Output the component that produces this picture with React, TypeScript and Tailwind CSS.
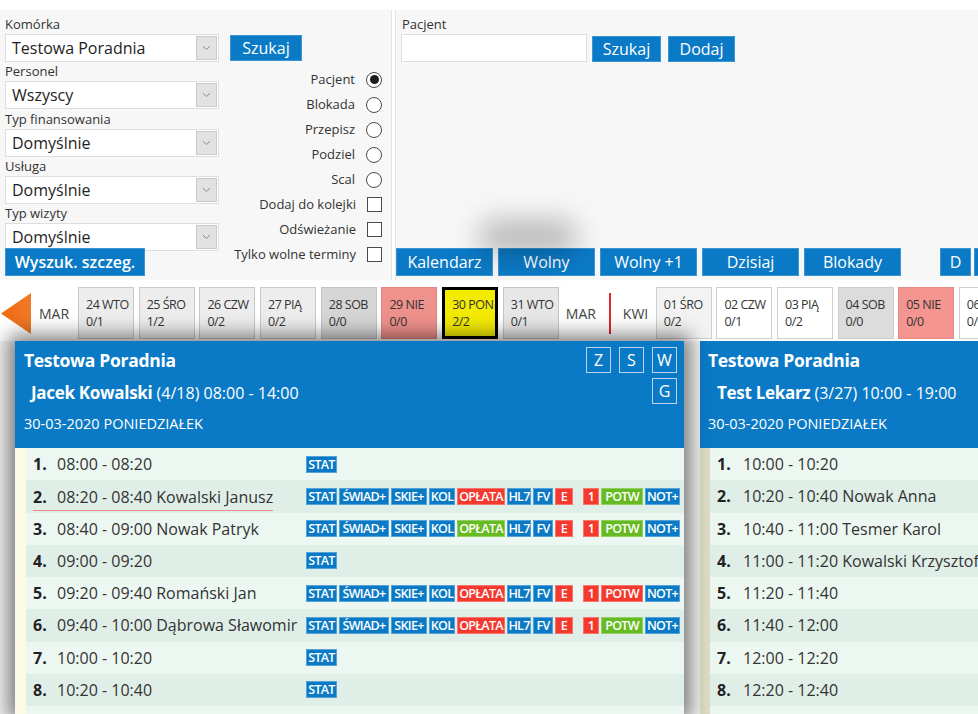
import React from "react";

type TagDef = { l: string; cls: string };

const B = "bg-[#0b7ac6]";
const R = "bg-[#f5392f]";
const G = "bg-[#66bb22]";

function fullTags(oplata: string, potw: string): TagDef[] {
  return [
    { l: "STAT", cls: `w-[31px] ${B}` },
    { l: "ŚWIAD+", cls: `w-[50px] ${B}` },
    { l: "SKIE+", cls: `w-[36px] ${B}` },
    { l: "KOL", cls: `w-[26px] ${B}` },
    { l: "OPŁATA", cls: `w-[48px] ${oplata}` },
    { l: "HL7", cls: `w-[24px] ${B}` },
    { l: "FV", cls: `w-[20px] ${B}` },
    { l: "E", cls: `w-[18px] ${R} mr-[8px]` },
    { l: "1", cls: `w-[16px] ${R}` },
    { l: "POTW", cls: `w-[42px] ${potw}` },
    { l: "NOT+", cls: `w-[35px] ${B}` },
  ];
}

const statOnly: TagDef[] = [{ l: "STAT", cls: `w-[31px] ${B}` }];

const leftRows: { n: number; t: string; tags: TagDef[]; u?: boolean }[] = [
  { n: 1, t: "08:00 - 08:20", tags: statOnly },
  { n: 2, t: "08:20 - 08:40 Kowalski Janusz", tags: fullTags(R, G), u: true },
  { n: 3, t: "08:40 - 09:00 Nowak Patryk", tags: fullTags(G, G) },
  { n: 4, t: "09:00 - 09:20", tags: statOnly },
  { n: 5, t: "09:20 - 09:40 Romański Jan", tags: fullTags(R, R) },
  { n: 6, t: "09:40 - 10:00 Dąbrowa Sławomir", tags: fullTags(R, G) },
  { n: 7, t: "10:00 - 10:20", tags: statOnly },
  { n: 8, t: "10:20 - 10:40", tags: statOnly },
];

const rightRows = [
  "10:00 - 10:20",
  "10:20 - 10:40 Nowak Anna",
  "10:40 - 11:00 Tesmer Karol",
  "11:00 - 11:20 Kowalski Krzysztof",
  "11:20 - 11:40",
  "11:40 - 12:00",
  "12:00 - 12:20",
  "12:20 - 12:40",
];

function Select({ value }: { value: string }) {
  return (
    <div className="flex h-[28px] w-[214px] border border-[#dedede] bg-white">
      <div className="flex-1 pl-[6px] text-[16px] leading-[26px] text-[#1e1e1e]">{value}</div>
      <div className="m-[1px] flex w-[21px] items-center justify-center border border-[#c9c9c9] bg-[#e2e2e2]">
        <svg width="9" height="6" viewBox="0 0 9 6">
          <path d="M1 1.2l3.5 3.3L8 1.2" stroke="#8a8a8a" fill="none" strokeWidth="1" />
        </svg>
      </div>
    </div>
  );
}

function Field({ label, value }: { label: string; value: string }) {
  return (
    <div className="h-[47.3px]">
      <div className="h-[19px] text-[13px] leading-[19px] text-[#333]">{label}</div>
      <Select value={value} />
    </div>
  );
}

function Radio({ on }: { on?: boolean }) {
  return (
    <span className="flex h-[16px] w-[16px] items-center justify-center rounded-full border border-[#4a4a4a] bg-white">
      {on && <span className="h-[9px] w-[9px] rounded-full bg-[#1c1c1c]" />}
    </span>
  );
}

function Check() {
  return <span className="block h-[15px] w-[15px] border border-[#4a4a4a] bg-white" />;
}

const opts: { l: string; k: "r" | "c"; on?: boolean }[] = [
  { l: "Pacjent", k: "r", on: true },
  { l: "Blokada", k: "r" },
  { l: "Przepisz", k: "r" },
  { l: "Podziel", k: "r" },
  { l: "Scal", k: "r" },
  { l: "Dodaj do kolejki", k: "c" },
  { l: "Odświeżanie", k: "c" },
  { l: "Tylko wolne terminy", k: "c" },
];

const btn =
  "flex items-center justify-center bg-[#0b7ac6] text-white border border-[#3b95d3] leading-none";

type Day = { a: string; b: string; cls: string };
const marDays: Day[] = [
  { a: "24 WTO", b: "0/1", cls: "bg-[#ededed] border-[#c9c9c9]" },
  { a: "25 ŚRO", b: "1/2", cls: "bg-[#ededed] border-[#c9c9c9]" },
  { a: "26 CZW", b: "0/2", cls: "bg-[#ededed] border-[#c9c9c9]" },
  { a: "27 PIĄ", b: "0/2", cls: "bg-[#ededed] border-[#c9c9c9]" },
  { a: "28 SOB", b: "0/0", cls: "bg-[#d6d6d6] border-[#c4c4c4]" },
  { a: "29 NIE", b: "0/0", cls: "bg-[#ef918c] border-[#e08580]" },
  { a: "30 PON", b: "2/2", cls: "bg-[#f3eb00] border-[3px] border-black pl-[5px]" },
  { a: "31 WTO", b: "0/1", cls: "bg-[#e7e7e7] border-[#c6c6c6]" },
];
const kwiDays: Day[] = [
  { a: "01 ŚRO", b: "0/2", cls: "bg-[#f3f3f3] border-[#cfcfcf]" },
  { a: "02 CZW", b: "0/1", cls: "bg-white border-[#cfcfcf]" },
  { a: "03 PIĄ", b: "0/2", cls: "bg-white border-[#cfcfcf]" },
  { a: "04 SOB", b: "0/0", cls: "bg-[#dcdcdc] border-[#cccccc]" },
  { a: "05 NIE", b: "0/0", cls: "bg-[#f4958f] border-[#e58a84]" },
  { a: "06 PON", b: "0/0", cls: "bg-white border-[#cfcfcf]" },
];

function DayCell({ d }: { d: Day }) {
  return (
    <div
      className={`flex h-[52px] w-[56px] shrink-0 flex-col justify-center overflow-hidden border pl-[7px] text-[12.5px] leading-[17px] tracking-[-0.5px] text-[#333] ${d.cls}`}
    >
      <span className="whitespace-nowrap">{d.a}</span>
      <span>{d.b}</span>
    </div>
  );
}

function HeaderBox({ t }: { t: string }) {
  return (
    <span className="flex h-[26px] w-[25px] items-center justify-center border border-[#b9d6ee] text-[16px] leading-none text-white">
      {t}
    </span>
  );
}

export default function App() {
  return (
    <div
      className="relative h-[714px] w-[978px] overflow-hidden bg-white"
      style={{ fontFamily: '"Open Sans", "Noto Sans", sans-serif' }}
    >
      <div className="h-[10px] bg-white" />
      {/* top panels */}
      <div className="flex h-[270px]">
        <div className="flex w-[392px] shrink-0 border-r border-[#e4e4e4] bg-[#f7f7f7] pl-[5px] pt-[5px]">
          <div className="w-[214px] shrink-0">
            <Field label="Komórka" value="Testowa Poradnia" />
            <Field label="Personel" value="Wszyscy" />
            <Field label="Typ finansowania" value="Domyślnie" />
            <Field label="Usługa" value="Domyślnie" />
            <Field label="Typ wizyty" value="Domyślnie" />
            <div className={`${btn} relative -mt-[3px] h-[28px] w-[140px] text-[16px] font-semibold`}>
              Wyszuk. szczeg.
            </div>
          </div>
          <div className="ml-[11px] flex flex-1 flex-col">
            <div className={`${btn} mt-[20px] h-[26px] w-[72px] text-[16px] font-medium`}>Szukaj</div>
            <div className="mt-[6px] flex flex-col items-end pr-[9px]">
              {opts.map((o) => (
                <div key={o.l} className="flex h-[25px] items-center whitespace-nowrap">
                  <span className="mr-[11px] text-[13px] text-[#333]">{o.l}</span>
                  {o.k === "r" ? <Radio on={o.on} /> : <Check />}
                </div>
              ))}
            </div>
          </div>
        </div>
        <div className="ml-[3px] flex flex-1 flex-col justify-between border-l border-[#e4e4e4] bg-[#f7f7f7] pb-[4px]">
          <div className="pl-[5px] pt-[5px]">
            <div className="h-[19px] pl-[1px] text-[13px] leading-[19px] text-[#333]">Pacjent</div>
            <div className="flex items-start">
              <div className="h-[28px] w-[186px] border border-[#dedede] bg-white" />
              <div className={`${btn} ml-[5px] mt-[2px] h-[26px] w-[69px] text-[16px] font-medium`}>Szukaj</div>
              <div className={`${btn} ml-[7px] mt-[2px] h-[26px] w-[67px] text-[16px] font-medium`}>Dodaj</div>
            </div>
          </div>
          <div className="flex h-[28px]">
            <div className={`${btn} w-[97px] text-[16px] font-medium`}>Kalendarz</div>
            <div className={`${btn} ml-[5px] w-[97px] text-[16px] font-medium`}>Wolny</div>
            <div className={`${btn} ml-[5px] w-[97px] text-[16px] font-medium`}>Wolny +1</div>
            <div className={`${btn} ml-[5px] w-[97px] text-[16px] font-medium`}>Dzisiaj</div>
            <div className={`${btn} ml-[5px] w-[97px] text-[16px] font-medium`}>Blokady</div>
            <div className={`${btn} ml-[39px] w-[31px] text-[16px] font-medium`}>D</div>
            <div className={`${btn} ml-[3px] w-[31px] shrink-0 text-[16px] font-medium`}></div>
          </div>
        </div>
      </div>

      {/* date strip */}
      <div className="flex h-[61px] items-start bg-white pt-[7px]">
        <svg className="ml-[1px] mt-[6px] shrink-0" width="30" height="41" viewBox="0 0 30 41">
          <defs>
            <linearGradient id="tri" x1="0" y1="0" x2="1" y2="0">
              <stop offset="0" stopColor="#f26a0c" />
              <stop offset="1" stopColor="#ef7a2a" />
            </linearGradient>
          </defs>
          <path d="M0 20.5L30 0V41Z" fill="url(#tri)" />
        </svg>
        <div className="ml-[8px] flex h-[52px] w-[30px] shrink-0 items-center text-[14px] text-[#444]">MAR</div>
        <div className="ml-[9px] flex shrink-0 gap-[4.7px]">
          {marDays.map((d) => (
            <DayCell key={d.a} d={d} />
          ))}
        </div>
        <div className="ml-[7px] flex h-[52px] w-[32px] shrink-0 items-center text-[14px] text-[#444]">MAR</div>
        <div className="ml-[11px] mt-[6px] h-[41px] w-[2px] shrink-0 bg-[#e3262a]" />
        <div className="ml-[12px] flex h-[52px] w-[30px] shrink-0 items-center text-[14px] text-[#444]">KWI</div>
        <div className="ml-[3px] flex shrink-0 gap-[4.6px]">
          {kwiDays.map((d) => (
            <DayCell key={d.a} d={d} />
          ))}
        </div>
      </div>

      {/* cards */}
      <div className="flex h-[373px] bg-[#f0f0f0]">
        <div className="relative z-10 ml-[15px] w-[669px] shrink-0 bg-white shadow-[0_0_18px_6px_rgba(0,0,0,0.5)]">
          <div className="relative h-[107px] bg-[#0b7ac6] text-white">
            <div className="pl-[9px] pt-[7px] text-[17.5px] font-bold leading-[24px] tracking-[-0.3px]">Testowa Poradnia</div>
            <div className="whitespace-nowrap pl-[16px] pt-[9px] leading-[24px]">
              <span className="text-[17px] font-bold tracking-[-0.3px]">Jacek Kowalski</span>
              <span className="text-[16px]"> (4/18) 08:00 - 14:00</span>
            </div>
            <div className="pl-[9px] pt-[9px] text-[14.5px] font-medium leading-[20px]">30-03-2020 PONIEDZIAŁEK</div>
            <div className="absolute right-[7px] top-[6px] flex flex-col items-end gap-[5px]">
              <div className="flex gap-[8px]">
                <HeaderBox t="Z" />
                <HeaderBox t="S" />
                <HeaderBox t="W" />
              </div>
              <HeaderBox t="G" />
            </div>
          </div>
          <div className="flex">
            <div className="w-[11px] shrink-0 bg-[#fbfae4]" />
            <div className="flex-1">
              {leftRows.map((r, i) => (
                <div
                  key={r.n}
                  className={`flex h-[32.25px] items-center pl-[7px] ${i % 2 === 0 ? "bg-[#edf7f2]" : "bg-[#e0eee8]"}`}
                >
                  <div className="flex w-[273px] shrink-0 items-center whitespace-nowrap">
                    <span className={`flex items-center ${r.u ? "-mb-[3px] border-b-[1.5px] border-[#f08a8a] pb-[1px]" : ""}`}>
                      <span className="w-[24px] text-[16px] font-bold text-[#222]">{r.n}.</span>
                      <span className="text-[16px] text-[#333]">{r.t}</span>
                    </span>
                  </div>
                  <div className="flex gap-[2px]">
                    {r.tags.map((t, k) => (
                      <span
                        key={k}
                        className={`flex h-[17px] items-center justify-center whitespace-nowrap border border-white/30 pt-[1px] text-[12.5px] font-semibold leading-[14px] tracking-[-0.7px] text-white ${t.cls}`}
                      >
                        {t.l}
                      </span>
                    ))}
                  </div>
                </div>
              ))}
              <div className="h-[32.25px] bg-[#edf7f2]" />
            </div>
          </div>
        </div>

        <div className="ml-[16px] w-[300px] shrink-0 bg-white">
          <div className="h-[107px] bg-[#0b7ac6] text-white">
            <div className="pl-[8px] pt-[7px] text-[17.5px] font-bold leading-[24px] tracking-[-0.3px]">Testowa Poradnia</div>
            <div className="whitespace-nowrap pl-[17px] pt-[9px] leading-[24px]">
              <span className="text-[17px] font-bold tracking-[-0.3px]">Test Lekarz</span>
              <span className="text-[16px]"> (3/27) 10:00 - 19:00</span>
            </div>
            <div className="pl-[8px] pt-[9px] text-[14.5px] font-medium leading-[20px]">30-03-2020 PONIEDZIAŁEK</div>
          </div>
          <div className="flex">
            <div className="w-[10px] shrink-0 bg-[#dedcc4]" />
            <div className="flex-1">
              {rightRows.map((t, i) => (
                <div
                  key={t}
                  className={`flex h-[32.25px] items-center whitespace-nowrap pl-[7px] ${i % 2 === 0 ? "bg-[#edf7f2]" : "bg-[#e0eee8]"}`}
                >
                  <span className="w-[26px] text-[16px] font-bold text-[#222]">{i + 1}.</span>
                  <span className="text-[16px] text-[#333]">{t}</span>
                </div>
              ))}
              <div className="h-[32.25px] bg-[#edf7f2]" />
            </div>
          </div>
        </div>
      </div>

      {/* soft shadow smudge near buttons */}
      <div className="pointer-events-none absolute left-[478px] top-[220px] h-[34px] w-[100px] rounded-full bg-black/25 blur-[14px]" />
    </div>
  );
}
